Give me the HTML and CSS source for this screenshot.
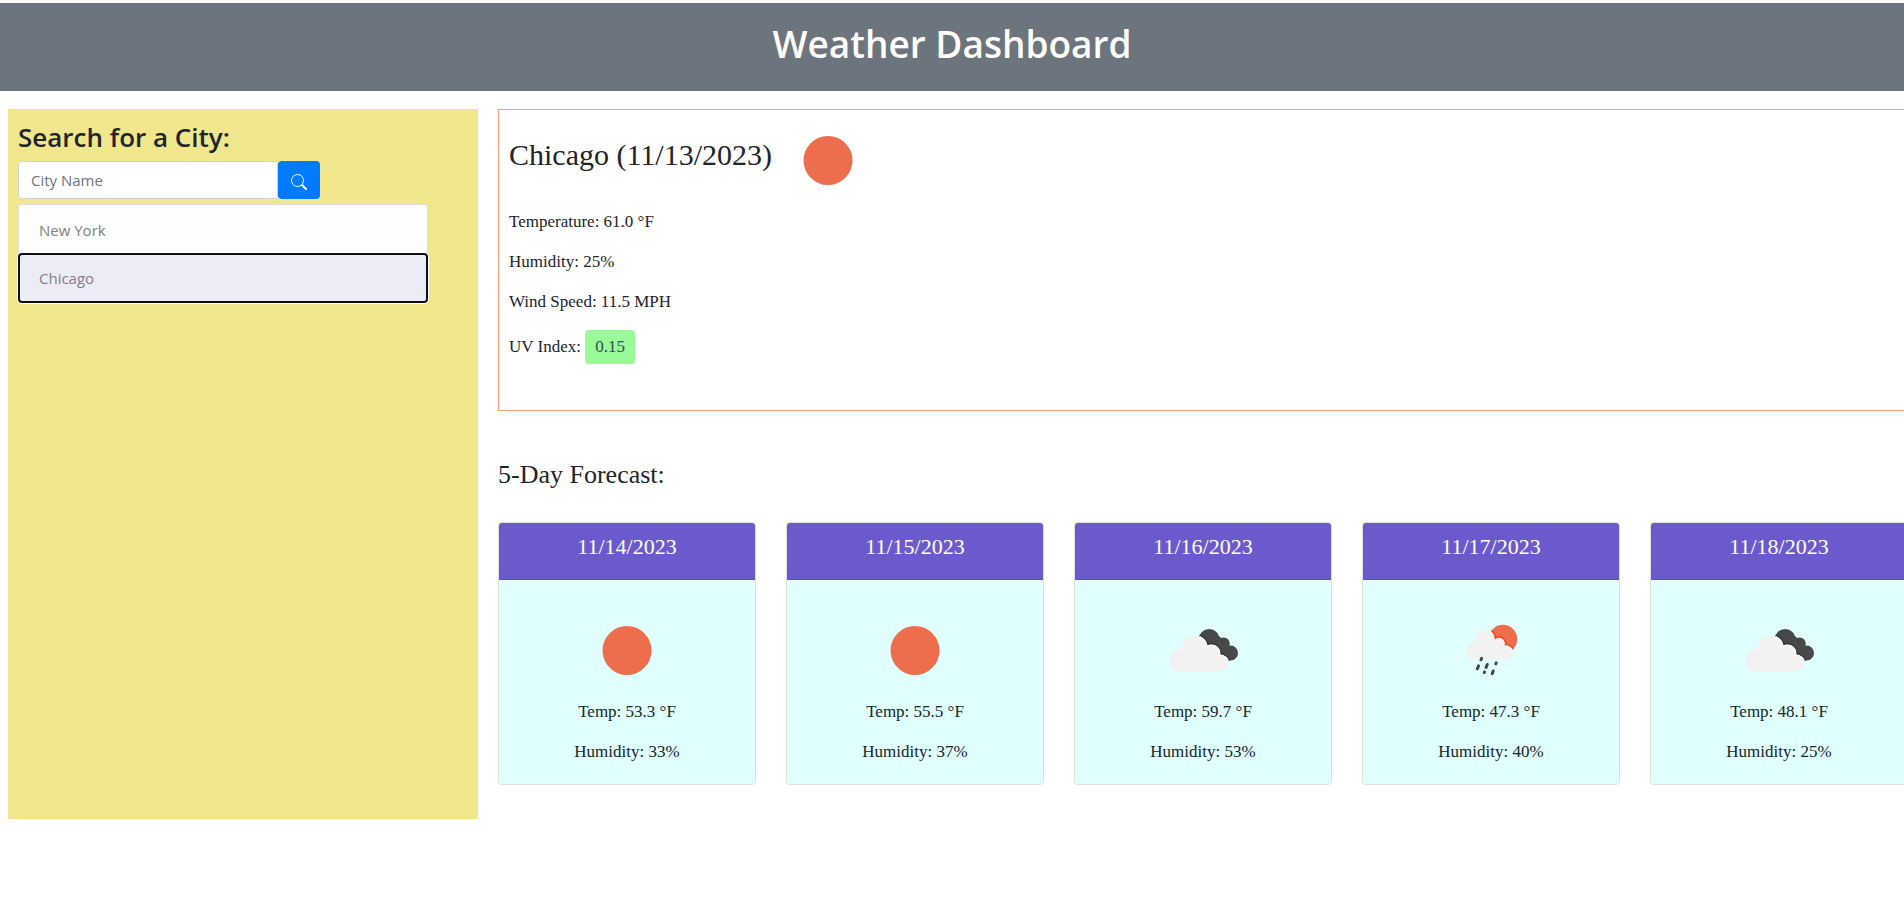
FILE: index.html
```html
<!DOCTYPE html>
<html lang="en">
<head>
<meta charset="utf-8">
<title>Weather Dashboard</title>
<link rel="stylesheet" href="styles.css">
</head>
<body>
<svg class="sprite" aria-hidden="true">
  <symbol id="sun" viewBox="0 0 100 100">
    <circle cx="50" cy="50.5" r="24.5" fill="#ec6e4c"/>
  </symbol>
  <symbol id="clouds" viewBox="0 0 100 100">
    <clipPath id="dark-clip">
      <circle cx="56" cy="39.2" r="10.2"/><circle cx="70.7" cy="43.4" r="6"/><circle cx="77.6" cy="53" r="7.4"/>
      <path d="M48 45 62 32 75 45 80 53 77 60.4 68 61Z"/>
    </clipPath>
    <g clip-path="url(#dark-clip)">
      <rect width="100" height="100" fill="#48484a"/>
      <g fill="#222" stroke="#222" stroke-width="4">
        <circle cx="41.5" cy="48" r="12.3"/><circle cx="58.5" cy="53.2" r="8"/><circle cx="67" cy="63.7" r="8.4"/>
      </g>
      <g fill="#fff" stroke="#fff" stroke-width="2">
        <circle cx="41.5" cy="48" r="12.3"/><circle cx="58.5" cy="53.2" r="8"/><circle cx="67" cy="63.7" r="8.4"/>
      </g>
    </g>
    <g fill="#f2f2f2">
      <circle cx="27.4" cy="61" r="11.1"/><circle cx="41.5" cy="48" r="12.3"/><circle cx="58.5" cy="53.2" r="7.8"/><circle cx="67" cy="63.7" r="8.3"/>
      <path d="M27 72V51L42 45 60 51 67 57V72Z"/>
    </g>
  </symbol>
  <symbol id="rain" viewBox="0 0 100 100">
    <clipPath id="sun-clip"><circle cx="62" cy="39" r="14.2"/></clipPath>
    <g clip-path="url(#sun-clip)">
      <rect width="100" height="100" fill="#ec6e4c"/>
      <g fill="#f0491f" stroke="#f0491f" stroke-width="3">
        <circle cx="44" cy="39" r="9.8"/><circle cx="58" cy="43.6" r="5.9"/><circle cx="65" cy="52.5" r="7.2"/>
      </g>
    </g>
    <g fill="#f2f2f2">
      <circle cx="33.6" cy="50.8" r="9"/><circle cx="44" cy="39" r="9.8"/><circle cx="58" cy="43.6" r="5.9"/><circle cx="65" cy="52.5" r="7.2"/>
      <path d="M33 59.8V43L44 39 58 42 66 49V59.8Z"/>
    </g>
    <path d="M40.6 58.4 40 59.8M37.6 65.8 36.4 68.8M46.3 64.5 45.1 67.4M55.2 62.9 54.8 63.8M43.5 72 43.3 72.6M52.2 71 51.2 73.6" stroke="#48484a" stroke-width="3" stroke-linecap="round"/>
  </symbol>
</svg>

<header class="banner"><h1 class="banner-title">Weather Dashboard</h1></header>

<div class="layout">
  <aside class="sidebar">
    <h2 class="sidebar-title"><label for="city">Search for a City:</label></h2>
    <form class="search">
      <input class="search-input" id="city" type="text" placeholder="City Name">
      <button class="search-button" type="button" aria-label="Search">
        <svg width="16" height="16" viewBox="0 0 16 16" fill="none" stroke="currentColor" aria-hidden="true"><circle cx="6.5" cy="6.5" r="6"/><path d="M11 11 15 15" stroke-width="2" stroke-linecap="round"/></svg>
      </button>
    </form>
    <div class="history">
      <button class="history-item" type="button">New York</button>
      <button class="history-item history-item-active" type="button">Chicago</button>
    </div>
  </aside>

  <main class="content">
    <section class="current">
      <div class="current-head">
        <h3 class="current-title">Chicago (11/13/2023)</h3>
        <svg class="icon"><use href="#sun"/></svg>
      </div>
      <p class="reading">Temperature: 61.0 °F</p>
      <p class="reading">Humidity: 25%</p>
      <p class="reading">Wind Speed: 11.5 MPH</p>
      <p class="reading">UV Index: <span class="uv">0.15</span></p>
    </section>

    <h3 class="forecast-title">5-Day Forecast:</h3>
    <section class="forecast">
      <article class="card">
        <h5 class="card-date">11/14/2023</h5>
        <div class="card-body"><svg class="icon"><use href="#sun"/></svg><p class="reading">Temp: 53.3 °F</p><p class="reading">Humidity: 33%</p></div>
      </article>
      <article class="card">
        <h5 class="card-date">11/15/2023</h5>
        <div class="card-body"><svg class="icon"><use href="#sun"/></svg><p class="reading">Temp: 55.5 °F</p><p class="reading">Humidity: 37%</p></div>
      </article>
      <article class="card">
        <h5 class="card-date">11/16/2023</h5>
        <div class="card-body"><svg class="icon"><use href="#clouds"/></svg><p class="reading">Temp: 59.7 °F</p><p class="reading">Humidity: 53%</p></div>
      </article>
      <article class="card">
        <h5 class="card-date">11/17/2023</h5>
        <div class="card-body"><svg class="icon"><use href="#rain"/></svg><p class="reading">Temp: 47.3 °F</p><p class="reading">Humidity: 40%</p></div>
      </article>
      <article class="card">
        <h5 class="card-date">11/18/2023</h5>
        <div class="card-body"><svg class="icon"><use href="#clouds"/></svg><p class="reading">Temp: 48.1 °F</p><p class="reading">Humidity: 25%</p></div>
      </article>
    </section>
  </main>
</div>
</body>
</html>
```
FILE: styles.css
```css
* { box-sizing: border-box; }
body {
  margin: 0;
  padding-top: 3px;
  overflow-x: hidden;
  background: #fff;
  color: #212529;
  font: 15px/24px "Segoe UI", "Open Sans", sans-serif;
}
h1, h2, h3, h5, p { margin: 0; }
.sprite { position: absolute; width: 0; height: 0; }
.banner {
  padding: 17px 16px 23px;
  background: #6c757d;
  color: #fff;
  text-align: center;
}
.banner-title { font-size: 37px; line-height: 48px; font-weight: 600; }
.layout {
  display: grid;
  grid-template-columns: 25% minmax(0, 1fr);
  gap: 16px;
  margin-top: 18px;
  padding-left: 8px;
}
.sidebar {
  margin-right: 4px;
  padding: 10px;
  background: #f0e68c;
}
.sidebar-title { padding-top: 1px; margin-bottom: 7px; font-size: 26px; line-height: 34px; font-weight: 600; }
.search { display: flex; width: 67%; }
.search-input {
  flex: 1;
  min-width: 0;
  height: 38px;
  padding: 6px 12px;
  border: 1px solid #ced4da;
  border-radius: 4px 0 0 4px;
  background: #fff;
  font: inherit;
}
.search-input::placeholder { color: #6c757d; opacity: 1; }
.search-button {
  display: grid;
  place-items: center;
  width: 42px;
  padding: 4px 0 0;
  border: 0;
  border-radius: 4px;
  background: #007bff;
  color: #fff;
}
.history { display: flex; flex-direction: column; width: 91%; margin-top: 5px; }
.history-item {
  height: 50px;
  padding: 0 20px;
  border: 1px solid #dfdfdf;
  border-bottom: 0;
  border-radius: 4px 4px 0 0;
  background: #fdfdfd;
  color: #818182;
  font: inherit;
  text-align: left;
}
.history-item-active {
  margin-top: -1px;
  padding: 0 19px;
  border: 2px solid #101010;
  border-radius: 4px;
  background: #ececf6;
  box-shadow: 0 0 0 1px #fff;
}
.content { font-family: Georgia, "Liberation Serif", serif; font-size: 17px; }
.current {
  padding: 0 10px 46px;
  border: 1px solid #ffa07a;
  border-right: 0;
}
.current-head { display: flex; gap: 6px; }
.current-title { padding-top: 28px; font-size: 30px; line-height: 34px; font-weight: 400; }
.icon { display: block; width: 100px; height: 100px; }
.reading + .reading { margin-top: 16px; }
.uv {
  display: inline-block;
  padding: 5px 10px;
  border-radius: 4px;
  background: #98fb98;
  color: #2f4f4f;
}
.forecast-title { margin: 48px 0 32px; font-size: 26px; line-height: 31px; font-weight: 400; }
.forecast { display: flex; gap: 30px; padding-bottom: 34px; }
.card {
  flex: 0 0 258px;
  border: 1px solid #dfdfdf;
  border-radius: 4px;
  overflow: hidden;
  background: #e0ffff;
  text-align: center;
}
.card-date {
  padding: 12px 20px 20px;
  border-bottom: 1px solid #5f50b8;
  background: #6a5acd;
  color: #fff;
  font-size: 22px;
  line-height: 24px;
  font-weight: 400;
}
.card-body { padding: 20px; }
.card .icon { margin: 0 auto; }
```
